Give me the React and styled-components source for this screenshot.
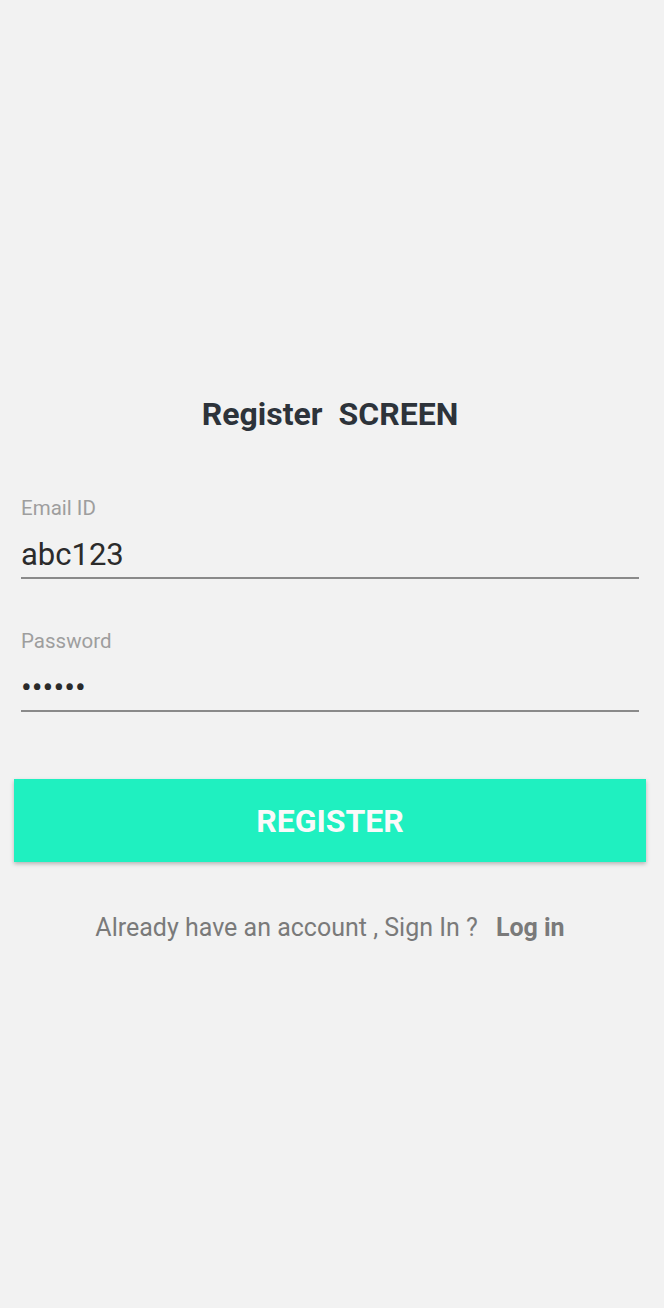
import styled, { createGlobalStyle } from "styled-components";

const GlobalStyle = createGlobalStyle`
  html, body {
    margin: 0;
    padding: 0;
    background: #f2f2f2;
    font-family: Roboto, "Noto Sans", sans-serif;
  }
`;

const Screen = styled.div`
  min-height: 1308px;
  box-sizing: border-box;
  padding: 395px 18px 0 14px;
  display: flex;
  flex-direction: column;
`;

const Title = styled.h1`
  margin: 0 0 63px;
  text-align: center;
  font-size: 32px;
  line-height: 38px;
  font-weight: 700;
  color: #2d333a;
  white-space: pre;
`;

const Field = styled.div`
  margin: 0 7px ${(p) => p.gap}px;
  display: flex;
  flex-direction: column;
`;

const Label = styled.label`
  font-size: 20.5px;
  color: #9e9e9e;
  line-height: 24px;
`;

const Input = styled.input`
  border: none;
  border-bottom: 2px solid #8a8a8a;
  background: transparent;
  outline: none;
  padding: 0;
  margin-top: 11px;
  height: 48px;
  box-sizing: border-box;
  font-family: inherit;
  font-size: ${(p) => (p.type === "password" ? "32px" : "31px")};
  color: #2b2b2b;
`;

const Button = styled.button`
  margin-top: 67px;
  height: 83px;
  border: none;
  background: #1ff0c0;
  color: #fafafa;
  font-family: inherit;
  font-size: 32px;
  font-weight: 700;
  box-shadow: 0 2px 4px rgba(0, 0, 0, 0.25);
`;

const Footer = styled.p`
  margin: 51px 0 0;
  text-align: center;
  font-size: 25px;
  line-height: 30px;
  color: #7a7a7a;
`;

const LoginLink = styled.span`
  font-weight: 700;
  margin-left: 18px;
`;

export default function App() {
  return (
    <>
      <GlobalStyle />
      <Screen>
        <Title>{"Register  SCREEN"}</Title>
        <Field gap={50}>
          <Label>Email ID</Label>
          <Input type="text" defaultValue="abc123" />
        </Field>
        <Field gap={0}>
          <Label>Password</Label>
          <Input type="password" defaultValue="123456" />
        </Field>
        <Button>REGISTER</Button>
        <Footer>
          Already have an account , Sign In ?<LoginLink>Log in</LoginLink>
        </Footer>
      </Screen>
    </>
  );
}
